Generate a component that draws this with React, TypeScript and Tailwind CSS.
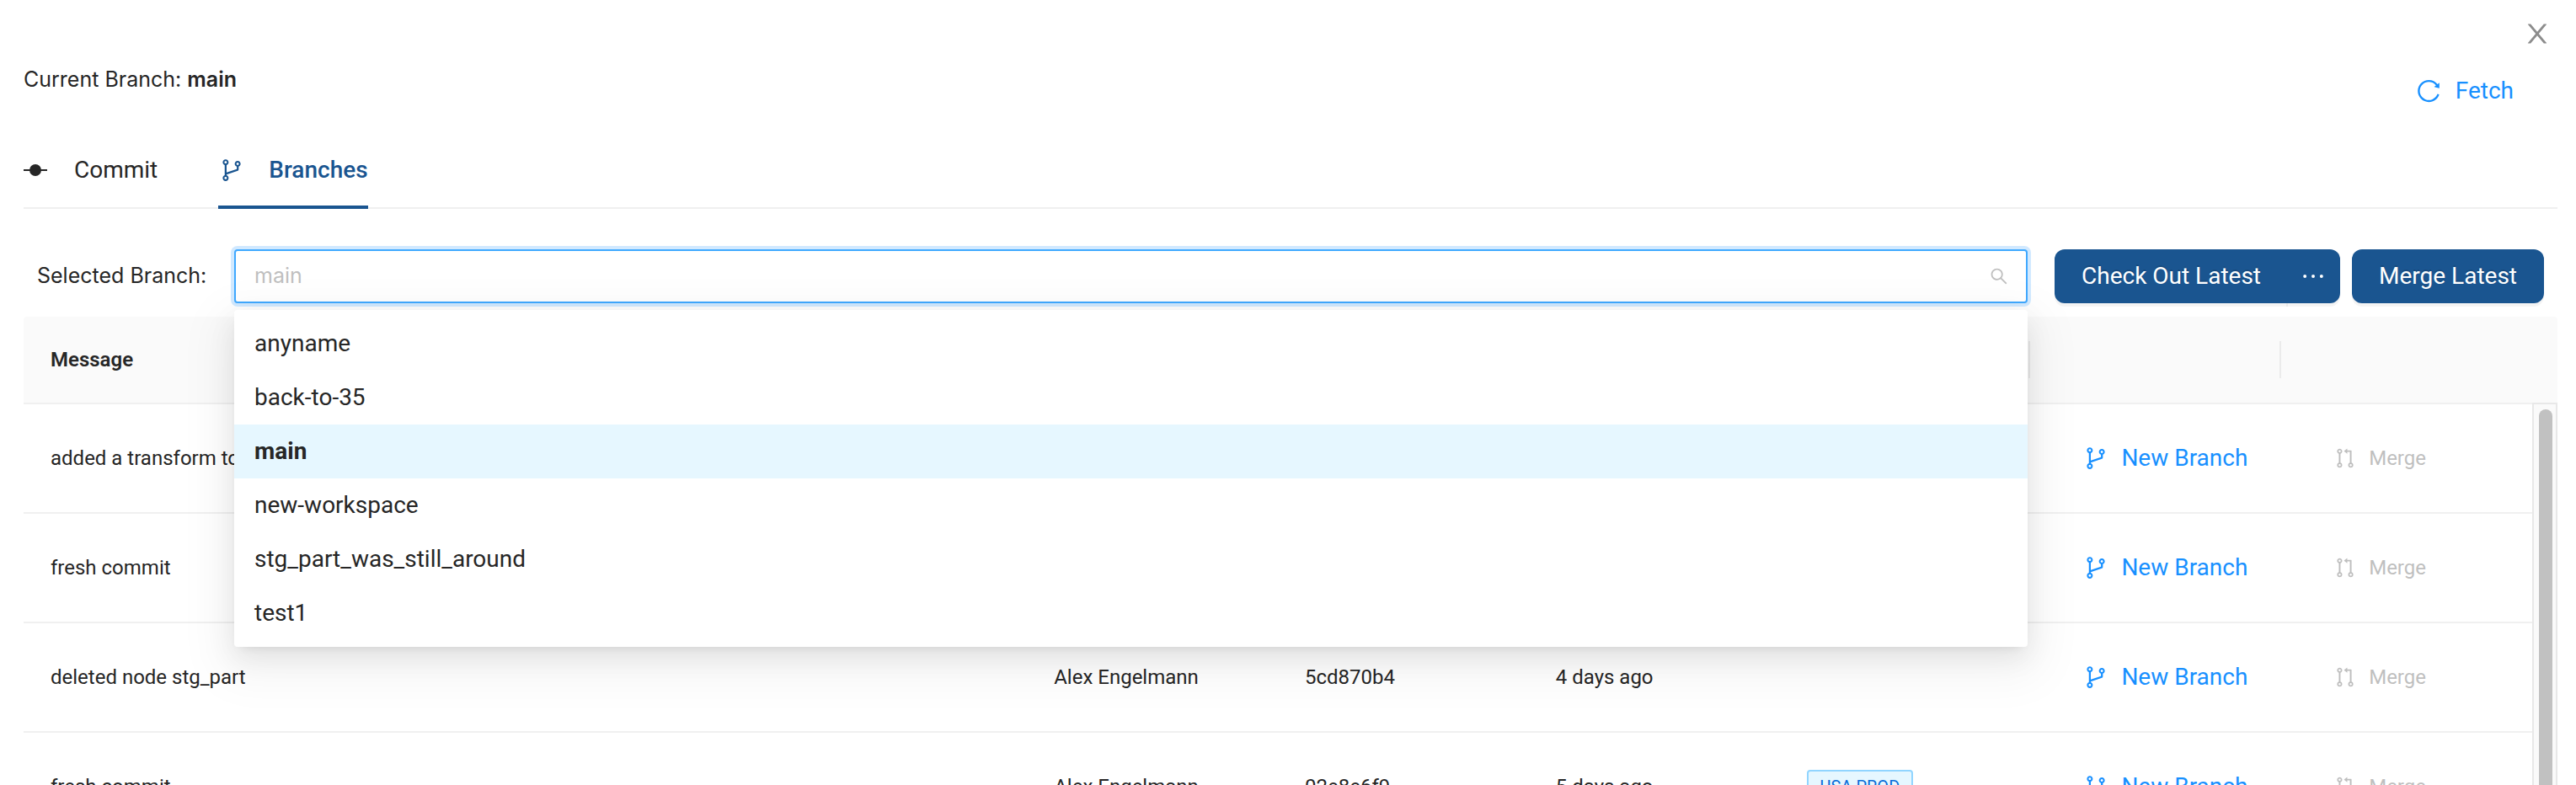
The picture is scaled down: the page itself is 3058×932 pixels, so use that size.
import {
  AiOutlineBranches,
  AiOutlineEllipsis,
  AiOutlinePullRequest,
  AiOutlineReload,
  AiOutlineSearch,
} from "react-icons/ai";

const branches = [
  "anyname",
  "back-to-35",
  "main",
  "new-workspace",
  "stg_part_was_still_around",
  "test1",
];

const commits = [
  { message: "added a transform to", author: "", hash: "", date: "", tag: "" },
  { message: "fresh commit", author: "", hash: "", date: "", tag: "" },
  {
    message: "deleted node stg_part",
    author: "Alex Engelmann",
    hash: "5cd870b4",
    date: "4 days ago",
    tag: "",
  },
  {
    message: "fresh commit",
    author: "Alex Engelmann",
    hash: "02e8e6f9",
    date: "5 days ago",
    tag: "USA PROD",
  },
];

const CommitIcon = () => (
  <svg viewBox="0 0 28 28" className="mr-1 size-7" fill="currentColor" aria-hidden="true">
    <circle cx="14" cy="14" r="7" />
    <path d="M0 13h28v2H0z" />
  </svg>
);

const CloseIcon = () => (
  <svg viewBox="0 0 1024 1024" className="size-9" fill="currentColor" aria-hidden="true">
    <path d="M563.8 512l262.5-312.9c4.4-5.2.7-13.1-6.1-13.1h-79.8c-4.7 0-9.2 2.1-12.3 5.7L511.6 449.8 295.1 191.7c-3-3.6-7.5-5.7-12.3-5.7H203c-6.8 0-10.5 7.9-6.1 13.1L459.4 512 196.9 824.9A7.95 7.95 0 0 0 203 838h79.8c4.7 0 9.2-2.1 12.3-5.7l216.5-258.1 216.5 258.1c3 3.6 7.5 5.7 12.3 5.7h79.8c6.8 0 10.5-7.9 6.1-13.1L563.8 512z" />
  </svg>
);

const Header = () => (
  <header>
    <div className="flex justify-end pt-[22px] pr-1.5">
      <button type="button" aria-label="Close" className="text-[#8c8c8c]">
        <CloseIcon />
      </button>
    </div>
    <div className="mt-[18px] flex items-start justify-between">
      <p className="font-['Inter',sans-serif] text-[25px] leading-9">
        Current Branch: <strong className="font-semibold">main</strong>
      </p>
      <button
        type="button"
        className="mr-5 flex h-16 items-center gap-4 px-8 text-[28px] text-[#1890ff]"
      >
        <AiOutlineReload className="size-8" />
        Fetch
      </button>
    </div>
  </header>
);

const Tabs = () => (
  <nav
    role="tablist"
    className="mt-4 flex gap-18 text-[28px] leading-11 shadow-[inset_0_-2px_0_#f0f0f0]"
  >
    <button type="button" role="tab" aria-selected="false" className="flex items-center gap-7 py-6">
      <CommitIcon />
      Commit
    </button>
    <button
      type="button"
      role="tab"
      aria-selected="true"
      className="flex items-center gap-7 py-6 font-medium text-[#1a5590] shadow-[inset_0_-4px_0_#1a5590]"
    >
      <AiOutlineBranches className="size-8" />
      Branches
    </button>
  </nav>
);

const BranchSelect = () => (
  <div className="relative flex-1">
    <div className="flex h-16 items-center rounded-sm border-2 border-[#40a9ff] bg-white pr-5 pl-[22px] shadow-[0_0_0_4px_rgba(24,144,255,0.2)]">
      <input
        id="branch"
        type="text"
        role="combobox"
        aria-expanded="true"
        aria-controls="branch-options"
        placeholder="main"
        className="min-w-0 flex-1 bg-transparent font-['Inter',sans-serif] text-[25px] outline-none placeholder:text-[#bfbfbf]"
      />
      <AiOutlineSearch className="size-6 text-[#bfbfbf]" />
    </div>
    <ul
      id="branch-options"
      role="listbox"
      className="absolute inset-x-0 top-full z-10 mt-2 rounded-sm bg-white py-2 text-[28px] leading-[64px] shadow-[0_6px_12px_-8px_rgba(0,0,0,0.12),0_12px_32px_0_rgba(0,0,0,0.08),0_18px_56px_16px_rgba(0,0,0,0.05)]"
    >
      {branches.map((branch) => (
        <li
          key={branch}
          role="option"
          aria-selected={branch === "main"}
          className="px-6 aria-selected:bg-[#e6f7ff] aria-selected:font-bold"
        >
          {branch}
        </li>
      ))}
    </ul>
  </div>
);

const Toolbar = () => {
  const button =
    "h-16 bg-[#1a5590] text-[28px] text-white shadow-[0_4px_0_rgba(0,0,0,0.045)] [text-shadow:0_-2px_0_rgba(0,0,0,0.12)]";

  return (
    <div className="mt-12 flex items-center px-4">
      <label htmlFor="branch" className="w-[234px] font-['Inter',sans-serif] text-[25px]">
        Selected Branch:
      </label>
      <BranchSelect />
      <div className="ml-8 flex">
        <button type="button" className={`${button} rounded-l-xl px-8`}>
          Check Out Latest
        </button>
        <button
          type="button"
          aria-label="More checkout options"
          className={`${button} -ml-0.5 rounded-r-xl px-3.5`}
        >
          <AiOutlineEllipsis className="size-9" />
        </button>
        <button type="button" className={`${button} ml-3.5 rounded-xl px-8`}>
          Merge Latest
        </button>
      </div>
    </div>
  );
};

const HeaderDivider = () => <div className="ml-auto h-11 w-0.5 bg-[#ebebeb]" />;

const CommitTable = () => (
  <div className="mt-4 flex items-stretch">
    <div className="flex-1">
      <table className="w-full table-fixed border-separate border-spacing-0 text-left text-2xl whitespace-nowrap">
        <colgroup>
          <col className="w-[40%]" />
          <col className="w-[10%]" />
          <col className="w-[10%]" />
          <col className="w-[10%]" />
          <col className="w-[10%]" />
          <col className="w-[10%]" />
          <col className="w-[10%]" />
        </colgroup>
        <thead>
          <tr className="h-[104px] bg-[#fafafa] *:border-b-2 *:border-[#f0f0f0]">
            <th className="rounded-tl-sm px-8 font-semibold">Message</th>
            <th />
            <th />
            <th />
            <th>
              <HeaderDivider />
            </th>
            <th>
              <HeaderDivider />
            </th>
            <th />
          </tr>
        </thead>
        <tbody>
          {commits.map((commit, index) => (
            <tr key={index} className="h-[130px] *:border-b-2 *:border-[#f0f0f0]">
              <td className="px-8">{commit.message}</td>
              <td className="px-8">{commit.author}</td>
              <td className="px-8">{commit.hash}</td>
              <td className="px-8">{commit.date}</td>
              <td className="px-8">
                {commit.tag && (
                  <span className="inline-block rounded-sm border-2 border-[#91d5ff] bg-[#e6f7ff] px-3.5 text-xl leading-9 text-[#096dd9]">
                    {commit.tag}
                  </span>
                )}
              </td>
              <td className="pl-[62px]">
                <button
                  type="button"
                  className="flex items-center gap-3.5 text-[28px] text-[#1890ff]"
                >
                  <AiOutlineBranches className="size-8" />
                  New Branch
                </button>
              </td>
              <td className="pl-[62px]">
                <button type="button" disabled className="flex items-center gap-3.5 text-[#bfbfbf]">
                  <AiOutlinePullRequest className="size-7" />
                  Merge
                </button>
              </td>
            </tr>
          ))}
        </tbody>
      </table>
    </div>
    <div className="flex w-[30px] flex-col">
      <div className="h-[102px] rounded-tr-sm bg-[#fafafa]" />
      <div className="flex-1 border-2 border-[#e8e8e8] bg-[#fafafa] px-1.5 pt-1.5">
        <div className="h-full w-4 rounded-full bg-[#c1c1c1]" />
      </div>
    </div>
  </div>
);

const App = () => {
  return (
    <main className="h-screen overflow-hidden bg-white pr-[22px] pl-7 font-['Roboto',sans-serif] text-[#262626]">
      <Header />
      <Tabs />
      <Toolbar />
      <CommitTable />
    </main>
  );
};

export default App;
